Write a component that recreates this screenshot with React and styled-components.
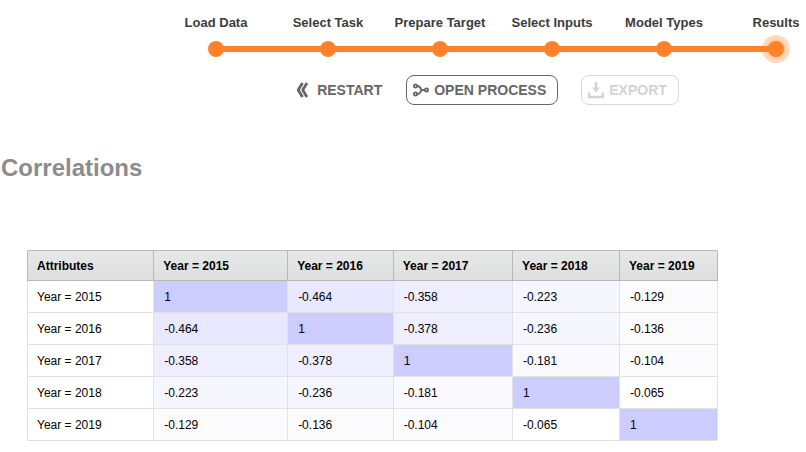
import React from "react";
import styled, { createGlobalStyle } from "styled-components";

const GlobalStyle = createGlobalStyle`
  * { box-sizing: border-box; }
  body {
    margin: 0;
    background: #fff;
    color: #000;
    font-family: "Liberation Sans", Arial, sans-serif;
    overflow-x: hidden;
  }
`;

const Page = styled.main`
  overflow: hidden;
`;

const Steps = styled.ol`
  display: grid;
  grid-template-columns: repeat(6, 1fr);
  list-style: none;
  margin: 0 -26px 0 160px;
  padding: 15px 0 0;
`;

const Step = styled.li`
  display: flex;
  flex-direction: column;
  align-items: center;
  color: #3c3c3c;
  font-size: 13px;
  font-weight: bold;
  line-height: 16px;
  white-space: nowrap;
`;

const Track = styled.div`
  display: grid;
  grid-template-columns: 1fr 28px 1fr;
  align-items: center;
  width: 100%;
  height: 28px;
  margin-top: 4px;
  background: linear-gradient(#ff8228, #ff8228) no-repeat;
  background-size: ${(p) => (p.$end ? "50%" : "100%")} 6px;
  background-position: ${(p) => (p.$end === "first" ? "right" : "left")} center;
`;

const Halo = styled.span`
  grid-column: 2;
  display: grid;
  place-items: center;
  width: 28px;
  height: 28px;
  border-radius: 50%;
  background: ${(p) =>
    p.$active
      ? "radial-gradient(circle closest-side, rgba(255, 130, 40, 0.45) 60%, rgba(255, 130, 40, 0.3) 80%)"
      : "transparent"};
`;

const Dot = styled.span`
  width: 16px;
  height: 16px;
  border-radius: 50%;
  background: #ff8228;
`;

const Toolbar = styled.div`
  display: flex;
  justify-content: center;
  gap: 23px;
  margin: 12px 0 0 162px;
`;

const ActionButton = styled.button`
  display: flex;
  align-items: center;
  gap: 4px;
  height: 30px;
  padding: 0 ${(p) => (p.$plain ? 0 : 11)}px 0 6px;
  border: 1px solid ${(p) => (p.$plain ? "transparent" : "currentColor")};
  border-radius: 8px;
  background: #fff;
  color: #666;
  font: bold 14px "Liberation Sans", Arial, sans-serif;
  white-space: nowrap;

  &:disabled {
    border-color: #d8d8d8;
    color: #d3d3d3;
  }
`;

const Icon = styled.svg`
  flex: none;
  width: 17px;
  height: 18px;
  fill: none;
  stroke: currentColor;
`;

const Title = styled.h1`
  margin: 49px 0 0 1px;
  color: #8c8c8c;
  font-size: 24px;
  line-height: 28px;
`;

const TableArea = styled.section`
  padding: 68px 88px 11px 27px;
`;

const Table = styled.table`
  width: 100%;
  table-layout: fixed;
  border-collapse: separate;
  border-spacing: 0;
  border-left: 1px solid #e2e2e2;
  font-size: 12px;
  line-height: 15px;
`;

const Column = styled.col`
  width: ${(p) => p.$share}%;
`;

const HeadCell = styled.th`
  height: 31px;
  padding: 2px 9px 0;
  border: solid #b8b8b8;
  border-width: 1px 1px 1px 0;
  background: linear-gradient(#e6e8e7, #dedede);
  text-align: left;

  &:first-child {
    border-top-left-radius: 2px;
    box-shadow: -1px 0 #b8b8b8;
  }
  &:last-child {
    border-top-right-radius: 2px;
  }
`;

const LabelCell = styled.th`
  height: 32px;
  padding: 2px 9px 0;
  border: solid #e2e2e2;
  border-width: 0 1px 1px 0;
  font-weight: normal;
  text-align: left;
`;

const ValueCell = styled.td`
  height: 32px;
  padding: 2px 10px 0;
  border: solid #e2e2e2;
  border-width: 0 1px 1px 0;
  background: ${(p) => p.$shade};
`;

const steps = [
  "Load Data",
  "Select Task",
  "Prepare Target",
  "Select Inputs",
  "Model Types",
  "Results",
];

const years = [2015, 2016, 2017, 2018, 2019];
const columnShares = [18.3, 19.4, 15.3, 17.3, 15.5, 14.2];

const correlations = [
  [1, -0.464, -0.358, -0.223, -0.129],
  [-0.464, 1, -0.378, -0.236, -0.136],
  [-0.358, -0.378, 1, -0.181, -0.104],
  [-0.223, -0.236, -0.181, 1, -0.065],
  [-0.129, -0.136, -0.104, -0.065, 1],
];

function shadeFor(value) {
  const size = Math.abs(value);
  if (size === 1) return "#ccccff";
  if (size > 0.4) return "#e8e8ff";
  if (size > 0.3) return "#eeeeff";
  if (size > 0.2) return "#f6f6ff";
  if (size > 0.15) return "#f9f9ff";
  if (size > 0.1) return "#fcfcff";
  return "#ffffff";
}

function RestartIcon() {
  return (
    <Icon viewBox="0 0 17 18" aria-hidden="true">
      <path
        d="M6.5 2 L2.2 9 L6.5 16 M11 2 L6.7 9 L11 16"
        strokeWidth="2.8"
        strokeLinejoin="round"
      />
    </Icon>
  );
}

function ProcessIcon() {
  return (
    <Icon viewBox="0 0 17 18" aria-hidden="true" strokeWidth="1.8">
      <circle cx="2.5" cy="5" r="1.6" />
      <circle cx="2.5" cy="13" r="1.6" />
      <circle cx="13.5" cy="9" r="1.6" />
      <path d="M4.5 5 C7 5 7.5 7 8.5 9 C7.5 11 7 13 4.5 13 M8 9 H12" />
    </Icon>
  );
}

function ExportIcon() {
  return (
    <Icon viewBox="0 0 17 18" aria-hidden="true">
      <path d="M1.2 11.5 V16 H14.8 V11.5" strokeWidth="2.4" />
      <path d="M8 1 V8" strokeWidth="2.6" />
      <path d="M4.2 6.5 H11.8 L8 11.5 Z" fill="currentColor" stroke="none" />
    </Icon>
  );
}

export default function App() {
  return (
    <Page>
      <GlobalStyle />
      <Steps>
        {steps.map((name, i) => {
          const last = i === steps.length - 1;
          return (
            <Step key={name} aria-current={last ? "step" : undefined}>
              {name}
              <Track $end={i === 0 ? "first" : last ? "last" : undefined}>
                <Halo $active={last}>
                  <Dot />
                </Halo>
              </Track>
            </Step>
          );
        })}
      </Steps>
      <Toolbar>
        <ActionButton type="button" $plain>
          <RestartIcon />
          RESTART
        </ActionButton>
        <ActionButton type="button">
          <ProcessIcon />
          OPEN PROCESS
        </ActionButton>
        <ActionButton type="button" disabled>
          <ExportIcon />
          EXPORT
        </ActionButton>
      </Toolbar>
      <Title>Correlations</Title>
      <TableArea>
        <Table>
          <colgroup>
            {columnShares.map((share, i) => (
              <Column key={i} $share={share} />
            ))}
          </colgroup>
          <thead>
            <tr>
              <HeadCell scope="col">Attributes</HeadCell>
              {years.map((year) => (
                <HeadCell key={year} scope="col">{`Year = ${year}`}</HeadCell>
              ))}
            </tr>
          </thead>
          <tbody>
            {correlations.map((row, r) => (
              <tr key={years[r]}>
                <LabelCell scope="row">{`Year = ${years[r]}`}</LabelCell>
                {row.map((value, c) => (
                  <ValueCell key={years[c]} $shade={shadeFor(value)}>
                    {value}
                  </ValueCell>
                ))}
              </tr>
            ))}
          </tbody>
        </Table>
      </TableArea>
    </Page>
  );
}
